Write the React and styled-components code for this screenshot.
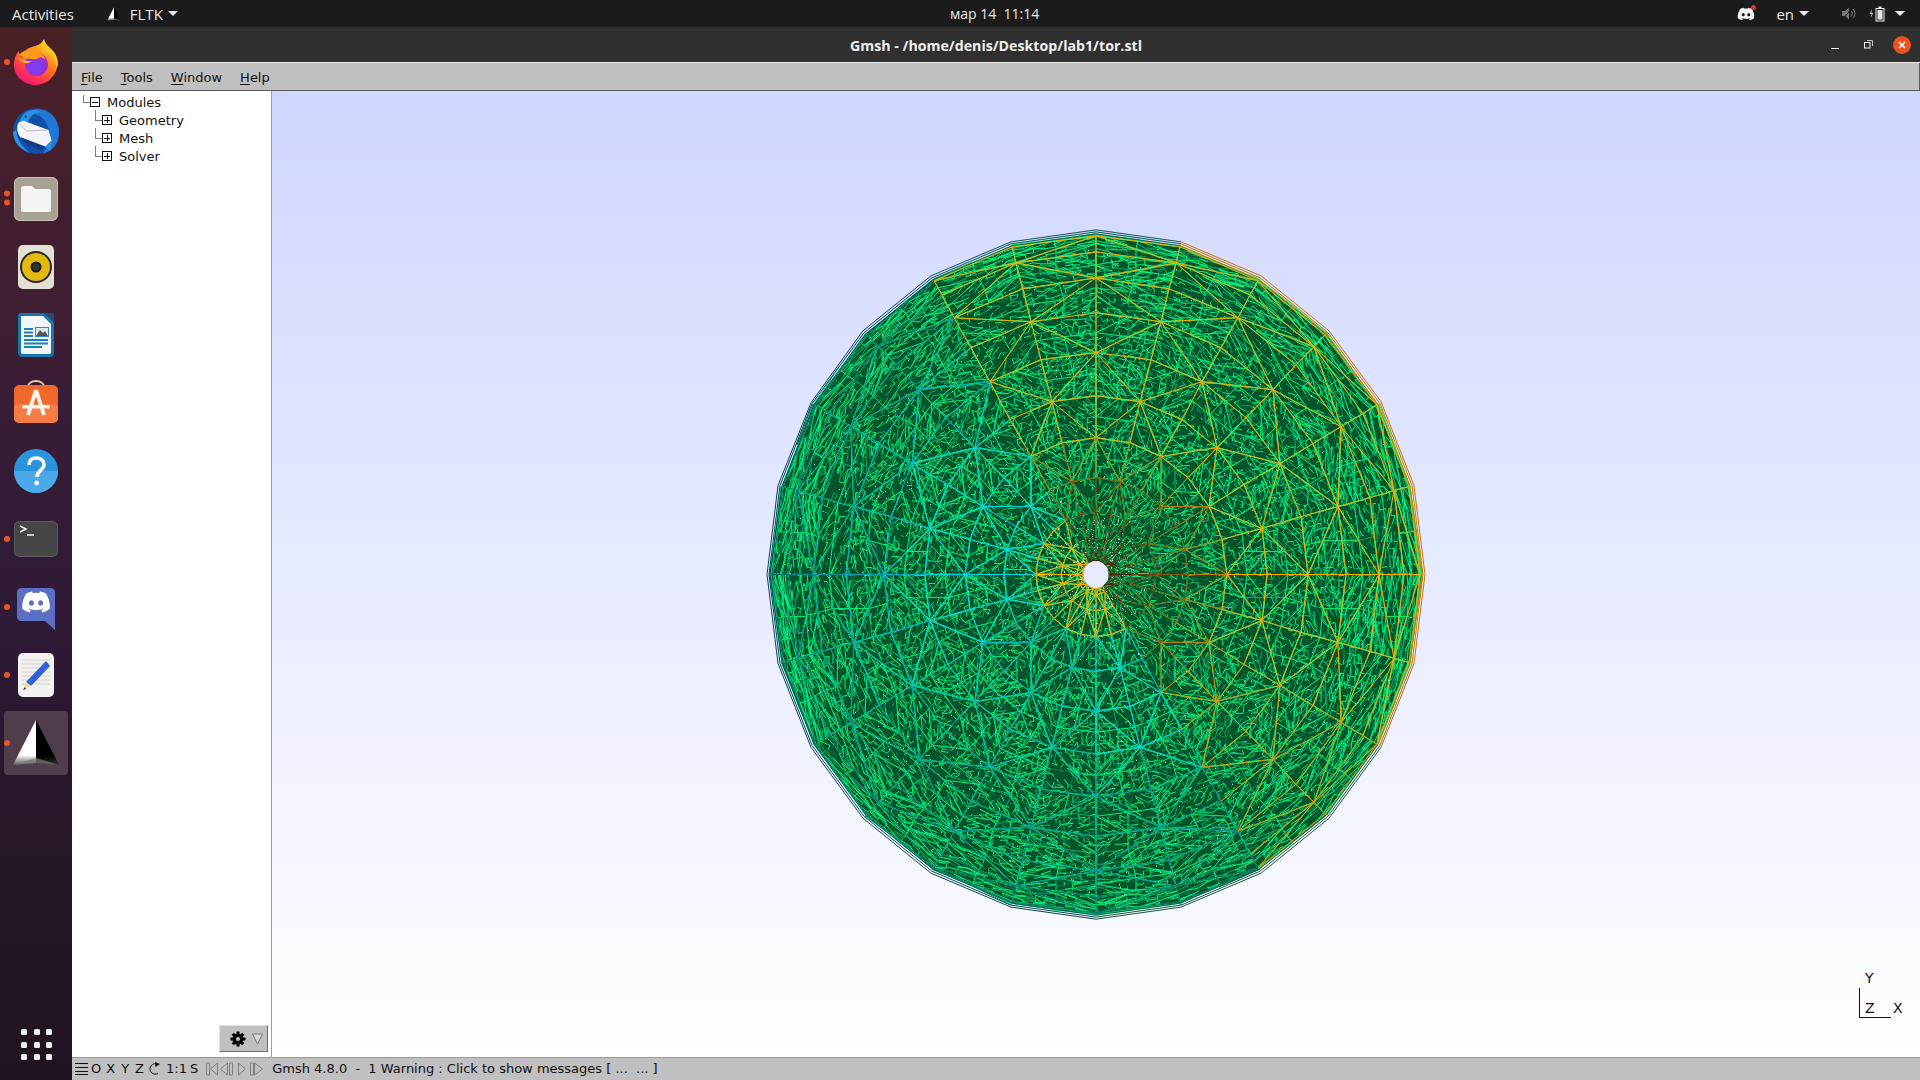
import React from "react";
import styled, { createGlobalStyle } from "styled-components";
import { FaDiscord } from "react-icons/fa";

const Global = createGlobalStyle`
  html, body { margin: 0; padding: 0; background: #1a1a1a; }
  #root { width: 1920px; height: 1080px; overflow: hidden; }
`;

/* ---------- mesh data ---------- */
const CX = 1096, CY = 574, SX = 0.955;
let seed = 12345;
const rnd = () => {
  seed = (seed * 1664525 + 1013904223) >>> 0;
  return seed / 4294967296;
};
const pt = (a, phi, scale = 1) => {
  const r = (179.5 + 165.5 * Math.cos((phi * Math.PI) / 180)) * scale;
  const t = (a * Math.PI) / 180;
  return [CX + SX * r * Math.cos(t), CY + r * Math.sin(t)];
};
const seg = (p, q) => `M${Math.round(p[0])} ${Math.round(p[1])}L${Math.round(q[0])} ${Math.round(q[1])}`;
const lerp = (p, q, t) => [p[0] + (q[0] - p[0]) * t, p[1] + (q[1] - p[1]) * t];

const innerScale = (phi) => (phi === 0 ? 0.988 : 1);

const tris = () => {
  const out = [];
  for (let i = 0; i < 24; i++) {
    for (let j = 0; j < 12; j++) {
      const a0 = i * 15, a1 = a0 + 15;
      const p0 = j * 15, p1 = p0 + 15;
      const A = pt(a0, p0, innerScale(p0)), B = pt(a1, p0, innerScale(p0));
      const C = pt(a1, p1), D = pt(a0, p1);
      if ((i + j) % 2) out.push([A, B, C], [A, C, D]);
      else out.push([A, B, D], [B, C, D]);
    }
  }
  return out;
};

const buildFine = () => {
  const bright = [], mid = [], soft = [];
  const sub = (T, spacing, density, maxN, jit) => {
    const ux = T[1][0] - T[0][0], uy = T[1][1] - T[0][1];
    const vx = T[2][0] - T[0][0], vy = T[2][1] - T[0][1];
    const area2 = Math.abs(ux * vy - uy * vx);
    const n = Math.max(1, Math.min(maxN, Math.round(Math.sqrt(area2) / spacing)));
    const grid = {};
    const node = (u, v) => {
      const k = u * 100 + v;
      if (grid[k]) return grid[k];
      const a = lerp(T[0], T[1], u / n);
      const b = lerp(T[0], T[2], u / n);
      const p = u === 0 ? a : lerp(a, b, v / u);
      grid[k] = [p[0] + (rnd() - 0.5) * jit, p[1] + (rnd() - 0.5) * jit];
      return grid[k];
    };
    const local = density * (0.55 + rnd() * 0.7);
    const push = (p, q) => {
      const v = rnd() / local;
      if (v < 0.5) bright.push(seg(p, q));
      else if (v < 0.8) mid.push(seg(p, q));
      else if (v < 0.95) soft.push(seg(p, q));
    };
    for (let u = 0; u < n; u++) {
      for (let v = 0; v <= u; v++) {
        const a = node(u, v), b = node(u + 1, v), c = node(u + 1, v + 1);
        if (rnd() < 0.16) continue;
        push(a, b);
        push(a, c);
        push(b, c);
      }
    }
  };
  const all = tris();
  all.forEach((T) => sub(T, 4.500, 0.62, 17, 3));
  all.forEach((T) => sub(T, 24, 1.5, 3, 0));
  return { bright: bright.join(""), mid: mid.join(""), soft: soft.join("") };
};

const coarseColor = (p, q) => {
  const mx = (p[0] + q[0]) / 2 - CX, my = (p[1] + q[1]) / 2 - CY;
  const r = Math.hypot(mx / SX, my);
  const th = (Math.atan2(my, mx) * 180) / Math.PI;
  const warm = th > -120 && th < 60;
  if (warm) {
    if (r < 36) return "#4f2300";
    if (r < 70) return "#6b3600";
    if (r < 105) return "#8f4f00";
    if (r < 135) return "#c27600";
    return th > 30 ? "#e89200" : "#ffa600";
  }
  if (r < 72) return "#ffa600";
  if (r < 200) return th > 90 && th < 150 ? "#05b8bc" : "#00d4e6";
  if (r < 270) return th > 60 && th < 150 ? "#089a9a" : "#08a8c4";
  if (r < 310) return "#0a8a90";
  return "#076a60";
};

const buildCoarse = () => {
  const byColor = {};
  const add = (p, q) => {
    const c = coarseColor(p, q);
    (byColor[c] = byColor[c] || []).push(seg(p, q));
  };
  for (let i = 0; i < 24; i++) {
    for (let j = 1; j <= 12; j++) {
      const a0 = i * 15, a1 = a0 + 15, p0 = j * 15, p1 = p0 + 15;
      add(pt(a0, p0), pt(a1, p0));
      if (j < 12) {
        add(pt(a0, p0), pt(a0, p1));
        if ((i + j) % 2) add(pt(a0, p0), pt(a1, p1));
        else add(pt(a1, p0), pt(a0, p1));
      }
    }
  }
  return Object.entries(byColor).map(([c, s]) => [c, s.join("")]);
};

const ringPath = (phi, scale) => {
  let d = "";
  for (let i = 0; i < 24; i++) {
    const p = pt(i * 15, phi, scale);
    d += `${i ? "L" : "M"}${p[0].toFixed(1)} ${p[1].toFixed(1)}`;
  }
  return d + "Z";
};

const buildRim = () => {
  const byColor = {};
  const add = (s, a0) => {
    const p = pt(a0, 0, s), q = pt(a0 + 15, 0, s);
    const a = a0 + 7.500;
    const c = a > 285 || a < 15 ? "#c67800" : a < 30 ? "#b06a10" : a < 90 ? "#14573a" : a < 240 ? "#05484f" : "#0a5a50";
    (byColor[c] = byColor[c] || []).push(seg(p, q));
  };
  [1, 0.994, 0.988].forEach((s) => {
    for (let i = 0; i < 24; i++) add(s, i * 15);
  });
  return Object.entries(byColor).map(([c, s]) => [c, s.join("")]);
};

const buildSpeck = () => {
  let d = "";
  for (let i = 0; i < 900; i++) {
    const near = i < 260;
    const r = near ? 16 + rnd() * 40 : 20 + rnd() * 310;
    const t = rnd() * Math.PI * 2;
    d += `M${Math.round(CX + SX * r * Math.cos(t))} ${Math.round(CY + r * Math.sin(t))}h1`;
  }
  return d;
};

const FINE = buildFine();
const COARSE = buildCoarse();
const RIM = buildRim();
const SPECK = buildSpeck();
const FILL = ringPath(0, 0.988) + ringPath(180, 1);

/* ---------- layout ---------- */
const Screen = styled.div`
  width: 1920px;
  height: 1080px;
  display: flex;
  flex-direction: column;
  overflow: hidden;
`;
const TopBar = styled.div`
  height: 27px;
  flex: none;
  background: #1b1b1b;
  color: #e8e8e8;
  font: 15px "Open Sans", "Noto Sans", sans-serif;
  display: grid;
  grid-template-columns: 950px auto 1fr;
  align-items: center;
`;
const TopLeft = styled.div`
  display: flex;
  align-items: center;
  padding-left: 12px;
`;
const TopRight = styled.div`
  display: flex;
  align-items: center;
  justify-content: flex-end;
`;
const TopLabel = styled.span`
  margin-left: ${(p) => p.$ml || 0}px;
`;
const Clock = styled.div`
  white-space: pre;
  font-size: 14px;
`;
const Caret = styled.i`
  display: block;
  width: 0;
  height: 0;
  border-left: 5px solid transparent;
  border-right: 5px solid transparent;
  border-top: 5px solid #ececec;
  margin-left: ${(p) => p.$ml || 0}px;
  margin-right: ${(p) => p.$mr || 0}px;
`;
const TrayIcon = styled.span`
  position: relative;
  display: flex;
  margin-right: 21px;
  &::after {
    content: "";
    position: absolute;
    right: -1px;
    top: 0;
    width: 5px;
    height: 5px;
    border-radius: 50%;
    background: #e0322c;
  }
`;
const Body = styled.div`
  flex: 1;
  display: flex;
  min-height: 0;
`;
const Dock = styled.div`
  width: 72px;
  flex: none;
  background: linear-gradient(180deg, #4a2026 0%, #3d1e33 28%, #2f1a38 55%, #261726 80%, #20131f 100%);
  display: flex;
  flex-direction: column;
  padding-top: 1px;
  box-sizing: border-box;
`;
const DockItem = styled.div`
  height: 68.1px;
  flex: none;
  position: relative;
  display: flex;
  align-items: center;
  justify-content: center;
  &::before {
    content: "";
    position: absolute;
    display: ${(p) => (p.$active ? "block" : "none")};
    left: 4px;
    right: 4px;
    top: 2px;
    bottom: 2px;
    border-radius: 4px;
    background: #4f3d4c;
  }
  svg { position: relative; top: ${(p) => p.$dy || 0}px; }
`;
const Dots = styled.div`
  position: absolute;
  left: 4px;
  top: 50%;
  transform: translateY(-50%);
  display: flex;
  flex-direction: column;
  gap: 3px;
`;
const Dot = styled.i`
  display: block;
  width: 6px;
  height: 6px;
  border-radius: 50%;
  background: #e95420;
`;
const AppGrid = styled.div`
  margin-top: auto;
  margin-bottom: 20px;
  margin-left: 21px;
  display: grid;
  grid-template-columns: repeat(3, 6px);
  gap: 6.500px;
`;
const GridDot = styled.i`
  display: block;
  width: 6px;
  height: 6px;
  border-radius: 1.500px;
  background: #f2f2f2;
`;
const Main = styled.div`
  flex: 1;
  display: flex;
  flex-direction: column;
  min-width: 0;
`;
const TitleBar = styled.div`
  height: 36px;
  flex: none;
  background: #303030;
  border-bottom: 1px solid #e8e8e8;
  box-sizing: border-box;
  position: relative;
  padding-top: 1px;
  display: flex;
  align-items: center;
  justify-content: center;
  color: #f0f0f0;
  font: 700 14.200px "Open Sans", "Noto Sans", sans-serif;
`;
const WinButtons = styled.div`
  position: absolute;
  right: 0;
  top: 0;
  bottom: 0;
  display: flex;
  align-items: center;
`;
const Close = styled.div`
  width: 18px;
  height: 18px;
  border-radius: 50%;
  background: #e95420;
  margin: 0 9px 0 20px;
  display: flex;
  align-items: center;
  justify-content: center;
`;
const MenuBar = styled.div`
  height: 28px;
  flex: none;
  background: #c0c0c0;
  border-bottom: 1px solid #5c5c5c;
  border-right: 1px solid #5c5c5c;
  box-sizing: border-box;
  display: flex;
  align-items: center;
  padding: 2px 0 0 9px;
  gap: 18px;
  font: 13px "DejaVu Sans", sans-serif;
  color: #111;
`;
const MenuItem = styled.span`
  u { text-underline-offset: 2px; }
`;
const Content = styled.div`
  flex: 1;
  display: flex;
  min-height: 0;
`;
const TreePanel = styled.div`
  width: 200px;
  flex: none;
  background: #fff;
  border-right: 1px solid #9c9c9c;
  box-sizing: border-box;
  position: relative;
  padding-top: 2px;
  font: 13px "DejaVu Sans", sans-serif;
  color: #111;
`;
const TreeRow = styled.div`
  height: 18px;
  display: flex;
  align-items: center;
  position: relative;
  padding-left: ${(p) => (p.$child ? 30 : 18)}px;
  &::before {
    content: "";
    position: absolute;
    left: ${(p) => (p.$child ? 23 : 11)}px;
    top: ${(p) => (p.$child ? -1 : 2)}px;
    width: 7px;
    height: ${(p) => (p.$child ? 10 : 7)}px;
    border-left: 1px solid #7c7c7c;
    border-bottom: 1px solid #7c7c7c;
  }
`;
const Toggle = styled.span`
  width: 8px;
  height: 8px;
  border: 1px solid #111;
  background: #fff;
  box-sizing: content-box;
  margin-right: 7px;
  position: relative;
  flex: none;
  &::before {
    content: "";
    position: absolute;
    left: 1px;
    right: 1px;
    top: 3.500px;
    height: 1px;
    background: #111;
  }
  &::after {
    content: "";
    display: ${(p) => (p.$open ? "none" : "block")};
    position: absolute;
    top: 1px;
    bottom: 1px;
    left: 3.500px;
    width: 1px;
    background: #111;
  }
`;
const GearButton = styled.div`
  position: absolute;
  right: 3px;
  bottom: 5px;
  width: 49px;
  height: 27px;
  box-sizing: border-box;
  background: #c0c0c0;
  border-right: 1px solid #6e6e6e;
  border-bottom: 1px solid #6e6e6e;
  border-top: 1px solid #e0e0e0;
  border-left: 1px solid #e0e0e0;
  display: flex;
  align-items: center;
  justify-content: flex-end;
  padding-right: 4px;
  gap: 6px;
`;
const Graphic = styled.div`
  flex: 1;
  position: relative;
  background: linear-gradient(180deg, #cfd6ff 0%, #ffffff 100%);
  min-width: 0;
`;
const MeshSvg = styled.svg`
  display: block;
  width: 100%;
  height: 100%;
`;
const Axes = styled.div`
  position: absolute;
  left: 1587px;
  top: 897px;
  width: 31px;
  height: 29px;
  border-left: 1px solid #111;
  border-bottom: 1px solid #111;
`;
const AxisLabel = styled.span`
  position: absolute;
  left: ${(p) => p.$x}px;
  top: ${(p) => p.$y}px;
  font: 14px "DejaVu Sans", sans-serif;
  color: #111;
  line-height: 16px;
`;
const StatusBar = styled.div`
  height: 23px;
  flex: none;
  background: #c0c0c0;
  border-top: 1px solid #9a9a9a;
  box-sizing: border-box;
  display: flex;
  align-items: center;
  padding: 0 0 1px 3px;
  font: 13px "DejaVu Sans", sans-serif;
  color: #111;
  white-space: pre;
`;
const StatusLabel = styled.span`
  margin-left: ${(p) => p.$ml || 0}px;
`;

/* ---------- icons ---------- */
const GmshLogo = ({ size }) => (
  <svg width={size} height={size} viewBox="0 0 48 48">
    <defs>
      <linearGradient id="gb" x1="0" y1="0" x2="0" y2="1">
        <stop offset="0.78" stopColor="#fff" />
        <stop offset="1" stopColor="#555" />
      </linearGradient>
      <linearGradient id="gk" x1="0" y1="0" x2="0" y2="1">
        <stop offset="0.8" stopColor="#000" />
        <stop offset="1" stopColor="#333" />
      </linearGradient>
    </defs>
    <path d="M24 1 L24 44 L1 46 Z" fill="url(#gb)" />
    <path d="M24 1 L47 46 L24 44 Z" fill="url(#gk)" />
    <path d="M1 46 L24 39 L47 46 L24 44 Z" fill="#777" opacity=".7" />
  </svg>
);
const Firefox = () => (
  <svg width="48" height="48" viewBox="0 0 48 48">
    <defs>
      <linearGradient id="ff1" x1="0.8" y1="0" x2="0.2" y2="1">
        <stop offset="0" stopColor="#ffe226" />
        <stop offset="0.45" stopColor="#ff7a1a" />
        <stop offset="0.8" stopColor="#ff2a5a" />
        <stop offset="1" stopColor="#e5167f" />
      </linearGradient>
      <radialGradient id="ff2" cx="0.45" cy="0.6" r="0.6">
        <stop offset="0" stopColor="#7340ff" />
        <stop offset="1" stopColor="#a32dc0" />
      </radialGradient>
    </defs>
    <path d="M32 1 C33 6 36 8 40 12 C46 18 47 26 44 33 C40 42 32 47 23 47 C12 47 2 38 2 27 C2 21 4 16 7 13 C7 16 8 18 10 19 C11 14 15 10 20 9 C24 8 29 7 32 1 Z" fill="url(#ff1)" />
    <path d="M32 1 C33 6 36 8 40 12 C45 17 47 24 45 30 C43 20 38 15 32 14 C30 10 31 5 32 1 Z" fill="#ffc324" />
    <circle cx="24.500" cy="26.500" r="11.500" fill="url(#ff2)" />
    <path d="M7 17 C11 12 17 11 22 13 C27 15 31 16 34 22 C30 18 26 19 25 21 C22 22 19 20 14 21 C12 19 9 18 7 17 Z" fill="#ff9a1f" />
    <path d="M6 20 C11 21 14 24 20 23 C15 27 10 25 6 20 Z" fill="#ffbd2e" />
  </svg>
);
const Thunderbird = () => (
  <svg width="50" height="50" viewBox="0 0 48 48">
    <circle cx="24" cy="25" r="22" fill="#0f4fa8" />
    <path d="M46 24 C47 36 41 44 30 47 C35 41 39 35 37 26 C35 15 28 8 16 7 C23 1 44 3 46 24 Z" fill="#1f78d6" />
    <path d="M2 26 C2 36 9 43 18 46 C12 40 6 36 5 24 Z" fill="#2f8fe6" />
    <path d="M8 17 C10 6 22 2 29 7 C23 7 17 11 16 18 L10 22 Z" fill="#2c8fdf" />
    <path d="M7 17 L12 15 L36 24 L39 34 L33 40 L9 31 C6 27 5 22 7 17 Z" fill="#f4f4f8" />
    <path d="M8 18 L15 25 L34 24" fill="none" stroke="#a8abb8" strokeWidth="0.800" />
    <path d="M9 31 L33 40 L30 44 L14 37 Z" fill="#173a86" />
    <path d="M33 40 L39 34 L38 44 Z" fill="#2f8fe0" />
    <circle cx="14" cy="11" r="1" fill="#0b2f66" />
  </svg>
);
const Files = () => (
  <svg width="46" height="46" viewBox="0 0 46 46">
    <rect x="1" y="1" width="44" height="44" rx="6" fill="#a8a294" />
    <rect x="1.500" y="1.500" width="43" height="43" rx="6" fill="none" stroke="#c6c1b4" />
    <path d="M8 13 C8 11 9 10 11 10 L19 10 L22 13 L36 13 C37 13 38 14 38 15 L38 34 C38 35.500 37 36 36 36 L10 36 C9 36 8 35.500 8 34 Z" fill="#f6f4f2" />
  </svg>
);
const Rhythmbox = () => (
  <svg width="38" height="46" viewBox="0 0 38 46">
    <rect x="1" y="1" width="36" height="44" rx="5" fill="#e4e0d6" />
    <circle cx="19" cy="23" r="16" fill="#2a2a2a" />
    <circle cx="19" cy="23" r="14" fill="#e3b80f" />
    <circle cx="19" cy="23" r="5.500" fill="#1c1c1c" />
    <circle cx="19" cy="23" r="3.500" fill="#333" />
  </svg>
);
const Writer = () => (
  <svg width="38" height="46" viewBox="0 0 38 46">
    <path d="M3 1 L27 1 L37 10 L37 41 C37 43 35 45 33 45 L5 45 C3 45 1 43 1 41 L1 3 Z" fill="#1577ad" />
    <path d="M27 1 L37 1 L37 10 Z" fill="#1f4e74" />
    <path d="M4 4 L26 4 L34 12 L34 40 C34 41.500 33 42 32 42 L6 42 C5 42 4 41 4 40 Z" fill="#f2f6f9" />
    <path d="M7 17h9M7 20.500h9M7 24h9M7 28h24M7 31.500h24M7 35h18" stroke="#1c7fb6" strokeWidth="1.800" />
    <rect x="18" y="15" width="14" height="10" fill="#2a8ac4" />
    <rect x="19" y="16" width="12" height="8" fill="#dbe6ed" />
    <path d="M19 24 L23 18 L26 21 L28 19 L31 24 Z" fill="#555" />
  </svg>
);
const Software = () => (
  <svg width="46" height="48" viewBox="0 0 46 48">
    <path d="M15 8 C15 0 31 0 31 8" fill="none" stroke="#e8c9a8" strokeWidth="2" />
    <rect x="1" y="6" width="44" height="38" rx="5" fill="#f0692c" />
    <rect x="1" y="25" width="44" height="19" rx="5" fill="#f47c45" />
    <path d="M23 11 L15 36 M23 11 L31 36" stroke="#fff3e8" strokeWidth="4" />
    <rect x="9" y="26" width="28" height="3.500" rx="1.700" fill="#fff3e8" />
  </svg>
);
const Help = () => (
  <svg width="46" height="46" viewBox="0 0 46 46">
    <circle cx="23" cy="23" r="22" fill="#2a93dd" />
    <path d="M1 23 C1 35 11 45 23 45 C35 45 45 35 45 23 Z" fill="#4aa9e6" />
    <path d="M16 17 C16 12 19 10 23.500 10 C28 10 31 13 31 16.500 C31 22 24 22.500 24 29" fill="none" stroke="#fff" strokeWidth="3.600" />
    <circle cx="23.700" cy="35" r="2.400" fill="#fff" />
  </svg>
);
const Terminal = () => (
  <svg width="46" height="38" viewBox="0 0 46 38">
    <rect x="1" y="1" width="44" height="36" rx="5" fill="#454545" />
    <rect x="1.500" y="1.500" width="43" height="35" rx="5" fill="none" stroke="#5a5a5a" />
    <path d="M7 6 L13 9 L7 12" fill="none" stroke="#f2f2f2" strokeWidth="1.500" />
    <path d="M14 15 h7" stroke="#f2f2f2" strokeWidth="1.500" />
  </svg>
);
const DiscordDock = () => (
  <svg width="38" height="42" viewBox="0 0 38 42">
    <path d="M4 0 H34 C36 0 38 2 38 4 V42 L28 33 H4 C2 33 0 31 0 29 V4 C0 2 2 0 4 0 Z" fill="#5a6fc4" />
    <g transform="translate(4 2) scale(.047)" fill="#fff">
      <path d="M524.531 69.836a1.5 1.5 0 0 0-.764-.7A485.065 485.065 0 0 0 404.081 32.03a1.816 1.816 0 0 0-1.923.91 337.461 337.461 0 0 0-14.9 30.6 447.848 447.848 0 0 0-134.426 0 309.541 309.541 0 0 0-15.135-30.6 1.89 1.89 0 0 0-1.924-.91 483.689 483.689 0 0 0-119.688 37.107 1.712 1.712 0 0 0-.788.676C39.068 183.651 18.186 294.69 28.43 404.354a2.016 2.016 0 0 0 .765 1.375 487.666 487.666 0 0 0 146.825 74.189 1.9 1.9 0 0 0 2.063-.676A348.2 348.2 0 0 0 208.12 430.4a1.86 1.86 0 0 0-1.019-2.588 321.173 321.173 0 0 1-45.868-21.853 1.885 1.885 0 0 1-.185-3.126 251.047 251.047 0 0 0 9.109-7.137 1.819 1.819 0 0 1 1.9-.256c96.229 43.917 200.41 43.917 295.5 0a1.812 1.812 0 0 1 1.924.233 234.533 234.533 0 0 0 9.132 7.16 1.884 1.884 0 0 1-.162 3.126 301.407 301.407 0 0 1-45.89 21.83 1.875 1.875 0 0 0-1 2.611 391.055 391.055 0 0 0 30.014 48.815 1.864 1.864 0 0 0 2.063.7A486.048 486.048 0 0 0 610.7 405.729a1.882 1.882 0 0 0 .765-1.352C623.729 277.594 590.933 167.465 524.531 69.836zM222.491 337.58c-28.972 0-52.844-26.587-52.844-59.239S193.056 219.1 222.491 219.1c29.665 0 53.306 26.82 52.843 59.239C275.334 310.993 251.924 337.58 222.491 337.58zm195.38 0c-28.971 0-52.843-26.587-52.843-59.239S388.437 219.1 417.871 219.1c29.667 0 53.307 26.82 52.844 59.239C470.715 310.993 447.538 337.58 417.871 337.58z" />
    </g>
  </svg>
);
const Gedit = () => (
  <svg width="38" height="46" viewBox="0 0 38 46">
    <rect x="1" y="1" width="36" height="44" rx="5" fill="#f2f2f0" />
    <path d="M5 8h28M5 12h28M5 16h28M5 20h28M5 24h28M5 28h28M5 32h28" stroke="#d2d2d2" />
    <path d="M29 9 L33 14 L14 34 L9 30 Z" fill="#2f62d8" />
    <path d="M9 30 L14 34 L6 38 Z" fill="#f5d8a8" />
    <path d="M6 38 L8 35 L9 37 Z" fill="#333" />
  </svg>
);
const Apps = [
  { icon: <Firefox />, dots: 1 },
  { icon: <Thunderbird /> },
  { icon: <Files />, dots: 2, dy: 1 },
  { icon: <Rhythmbox />, dy: 1 },
  { icon: <Writer />, dy: 1 },
  { icon: <Software /> },
  { icon: <Help /> },
  { icon: <Terminal />, dots: 1 },
  { icon: <DiscordDock />, dots: 1, dy: 2 },
  { icon: <Gedit />, dots: 1 },
  { icon: <GmshLogo size={48} />, dots: 1, active: true },
];

const Mute = () => (
  <svg width="15" height="15" viewBox="0 0 15 15" style={{ marginRight: 13 }}>
    <path d="M1 5h3l4-3.500v12l-4-3.500H1z" fill="#777" />
    <path d="M10 4.500c1.500 1.500 1.500 4.500 0 6M12 3c2.500 2.500 2.500 6.500 0 9" fill="none" stroke="#8a8a8a" />
    <path d="M1 14 L12 1" stroke="#1b1b1b" strokeWidth="1" />
  </svg>
);
const Battery = () => (
  <svg width="16" height="16" viewBox="0 0 16 16">
    <path d="M3 3 L0.500 8 H2.500 L1.500 12 L4.500 7 H2.500 Z" fill="#b5b5b5" />
    <rect x="7" y="2.500" width="8" height="12.500" fill="none" stroke="#f2f2f2" />
    <rect x="8.500" y="4" width="5" height="9.500" fill="#e4e4e4" />
    <rect x="9.500" y="0.500" width="3" height="2" fill="#f2f2f2" />
  </svg>
);
const Gear = () => (
  <svg width="16" height="16" viewBox="0 0 16 16">
    {[0, 45, 90, 135].map((a) => (
      <rect key={a} x="6.500" y="0.500" width="3" height="15" fill="#000" transform={`rotate(${a} 8 8)`} />
    ))}
    <circle cx="8" cy="8" r="5.500" fill="#000" />
    <circle cx="8" cy="8" r="2" fill="#c0c0c0" />
  </svg>
);
const NavIcons = () => (
  <svg width="58" height="14" viewBox="0 0 58 14" style={{ marginLeft: 8 }} fill="none" stroke="#808080">
    <path d="M0.500 1v12h3V1z" />
    <path d="M11.500 1 L4.500 7 L11.500 13 Z" />
    <path d="M21.500 1 L14.500 7 L21.500 13 Z" />
    <path d="M23.500 1v12h3V1z" />
    <path d="M32.500 1 L39.500 7 L32.500 13 Z" />
    <path d="M44.500 1v12h3V1z" />
    <path d="M48.500 1 L56.500 7 L48.500 13 Z" />
  </svg>
);
const Hamburger = () => (
  <svg width="13" height="12" viewBox="0 0 13 12">
    <path d="M0 0.500h13M0 4.500h13M0 8.500h13M0 11.500h13" stroke="#111" />
  </svg>
);
const Rotate = () => (
  <svg width="12" height="14" viewBox="0 0 12 14" style={{ marginLeft: 5 }}>
    <path d="M9 11.500 C4 13.500 1 10 1 7 C1 4 3.500 1.500 7 1.500" fill="none" stroke="#111" />
    <path d="M6 0 L11 2 L6.500 5 Z" fill="#111" />
  </svg>
);

/* ---------- mesh ---------- */
const Mesh = () => (
  <MeshSvg viewBox="272 90 1648 967" preserveAspectRatio="none">
    <path d={FILL} fill="#04532a" fillRule="evenodd" />
    <g fill="none" strokeWidth="1" shapeRendering="crispEdges">
      <path d={FINE.soft} stroke="#0a7a45" />
      <path d={FINE.mid} stroke="#0ea85e" />
      <path d={FINE.bright} stroke="#00f07e" />
      <path d={SPECK} stroke="#d8fff0" />
      {RIM.map(([c, d]) => (
        <path key={c} d={d} stroke={c} />
      ))}
      {COARSE.map(([c, d]) => (
        <path key={c} d={d} stroke={c} />
      ))}
    </g>
  </MeshSvg>
);

export default function App() {
  return (
    <Screen>
      <Global />
      <TopBar>
        <TopLeft>
          Activities
          <span style={{ width: 33 }} />
          <GmshLogo size={14} />
          <TopLabel $ml={9}>FLTK</TopLabel>
          <Caret $ml={5} />
        </TopLeft>
        <Clock>мар 14  11:14</Clock>
        <TopRight>
          <TrayIcon>
            <FaDiscord size={18} color="#f2f2f2" />
          </TrayIcon>
          <span>en</span>
          <Caret $ml={5} $mr={32} />
          <Mute />
          <Battery />
          <Caret $ml={10} $mr={15} />
        </TopRight>
      </TopBar>
      <Body>
        <Dock>
          {Apps.map((a, i) => (
            <DockItem key={i} $active={a.active} $dy={a.dy}>
              {a.icon}
              {a.dots ? (
                <Dots>
                  {Array.from({ length: a.dots }).map((_, k) => (
                    <Dot key={k} />
                  ))}
                </Dots>
              ) : null}
            </DockItem>
          ))}
          <AppGrid>
            {Array.from({ length: 9 }).map((_, i) => (
              <GridDot key={i} />
            ))}
          </AppGrid>
        </Dock>
        <Main>
          <TitleBar>
            Gmsh - /home/denis/Desktop/lab1/tor.stl
            <WinButtons>
              <svg width="10" height="10" viewBox="0 0 10 10" style={{ marginRight: 24 }}>
                <path d="M1 8.500h8" stroke="#f2f2f2" />
              </svg>
              <svg width="9" height="9" viewBox="0 0 9 9">
                <rect x="0.500" y="2.500" width="5.500" height="5.500" fill="none" stroke="#f2f2f2" />
                <path d="M3 0.500h5.500V6" fill="none" stroke="#c0c0c0" />
              </svg>
              <Close>
                <svg width="8" height="8" viewBox="0 0 8 8">
                  <path d="M1 1l6 6M7 1L1 7" stroke="#fff" strokeWidth="1.500" />
                </svg>
              </Close>
            </WinButtons>
          </TitleBar>
          <MenuBar>
            {["File", "Tools", "Window", "Help"].map((m) => (
              <MenuItem key={m}>
                <u>{m[0]}</u>
                {m.slice(1)}
              </MenuItem>
            ))}
          </MenuBar>
          <Content>
            <TreePanel>
              <TreeRow>
                <Toggle $open />
                Modules
              </TreeRow>
              <TreeRow $child>
                <Toggle />
                Geometry
              </TreeRow>
              <TreeRow $child>
                <Toggle />
                Mesh
              </TreeRow>
              <TreeRow $child>
                <Toggle />
                Solver
              </TreeRow>
              <GearButton>
                <Gear />
                <svg width="11" height="12" viewBox="0 0 11 12">
                  <path d="M0.500 1H10.500L5.500 11Z" fill="#d8d8d8" stroke="#777" />
                </svg>
              </GearButton>
            </TreePanel>
            <Graphic>
              <Mesh />
              <Axes>
                <AxisLabel $x={5} $y={-18}>Y</AxisLabel>
                <AxisLabel $x={5} $y={12}>Z</AxisLabel>
                <AxisLabel $x={33} $y={12}>X</AxisLabel>
              </Axes>
            </Graphic>
          </Content>
          <StatusBar>
            <Hamburger />
            <StatusLabel $ml={3}>O</StatusLabel>
            <StatusLabel $ml={5}>X</StatusLabel>
            <StatusLabel $ml={6}>Y</StatusLabel>
            <StatusLabel $ml={6}>Z</StatusLabel>
            <Rotate />
            <StatusLabel $ml={5}>1:1</StatusLabel>
            <StatusLabel $ml={3}>S</StatusLabel>
            <NavIcons />
            <StatusLabel $ml={8}>Gmsh 4.8.0  -  1 Warning : Click to show messages [ ...  ... ]</StatusLabel>
          </StatusBar>
        </Main>
      </Body>
    </Screen>
  );
}
